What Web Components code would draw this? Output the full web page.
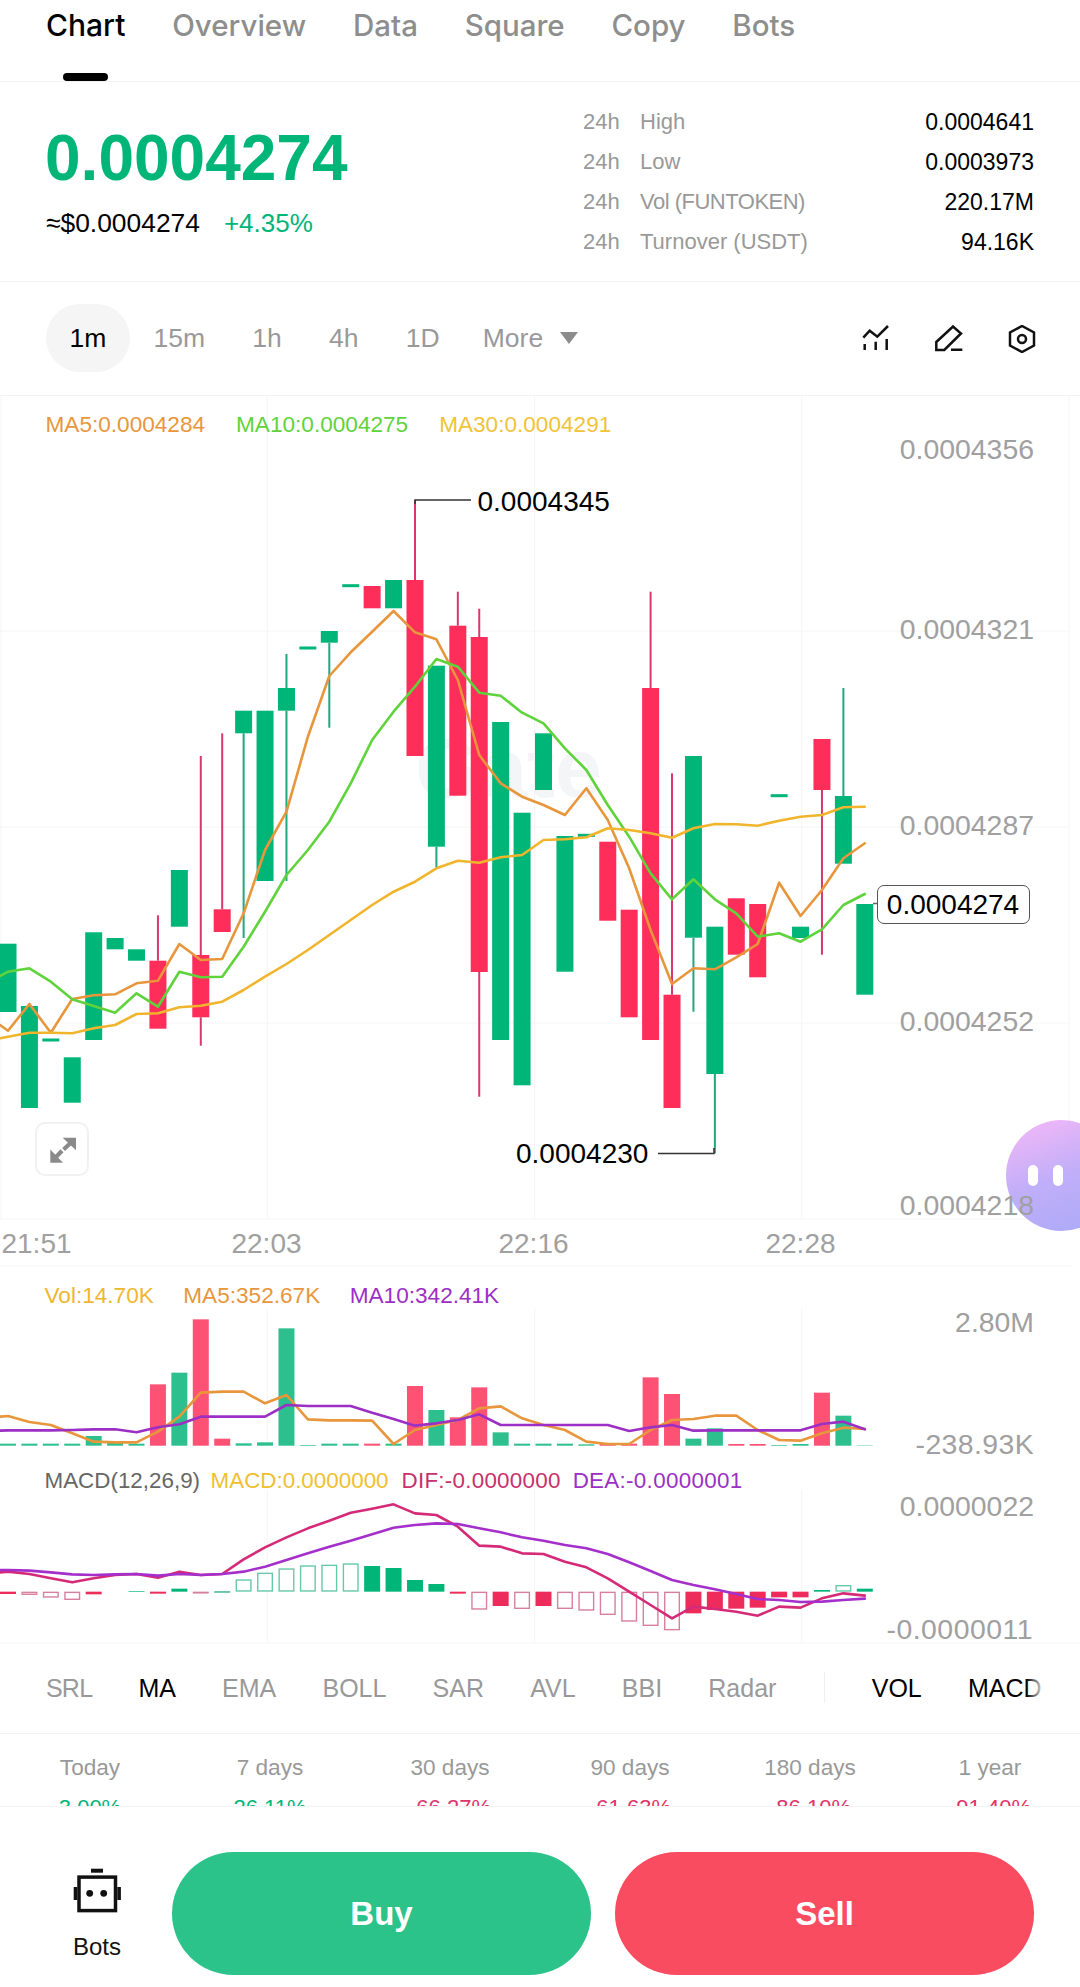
<!DOCTYPE html>
<html lang="en">
<head>
<meta charset="utf-8">
<title>Chart</title>
<style>
html,body{margin:0;padding:0;background:#fff}
body{width:1080px;height:1987px;overflow:hidden;font-family:"Liberation Sans",Arial,sans-serif;color:#000;display:flex;flex-direction:column}
</style>
</head>
<body>
<top-tabs>
  <tab-item active>Chart</tab-item><tab-item>Overview</tab-item><tab-item>Data</tab-item><tab-item>Square</tab-item><tab-item>Copy</tab-item><tab-item>Bots</tab-item>
</top-tabs>
<price-head>
  <stat-row slot="stats" name="High" value="0.0004641"></stat-row>
  <stat-row slot="stats" name="Low" value="0.0003973"></stat-row>
  <stat-row slot="stats" name="Vol (FUNTOKEN)" value="220.17M" tight></stat-row>
  <stat-row slot="stats" name="Turnover (USDT)" value="94.16K"></stat-row>
</price-head>
<time-bar></time-bar>
<kline-main></kline-main>
<kline-vol></kline-vol>
<kline-macd></kline-macd>
<indicator-bar></indicator-bar>
<period-row></period-row>
<trade-bar></trade-bar>

<script>
const F = '"Liberation Sans",Arial,sans-serif';
const X = i => 8 + 21.42 * i;
const GRID = '#f5f5f5';
const RED = '#ff2d5a', GREEN = '#00b578';
const line = (x1,y1,x2,y2,c,w=1.5) => `<line x1="${x1}" y1="${y1}" x2="${x2}" y2="${y2}" stroke="${c}" stroke-width="${w}"/>`;
const rect = (x,y,w,h,c) => `<rect x="${x}" y="${y}" width="${w}" height="${h}" fill="${c}"/>`;
const poly = (pts,c,w=2.6) => `<polyline points="${pts.map(p=>p.join(',')).join(' ')}" fill="none" stroke="${c}" stroke-width="${w}" stroke-linejoin="round" stroke-linecap="round"/>`;
const series = (ys,start,conv=y=>y) => [[0,conv(start)],...ys.map((y,i)=>[X(i),conv(y)])];

class Base extends HTMLElement {
  constructor(){ super(); this.attachShadow({mode:'open'}); }
  render(html){ this.shadowRoot.innerHTML = html; }
}

customElements.define('tab-item', class extends Base {
  connectedCallback(){ this.render(`<style>
    :host{display:flex;flex-direction:column;justify-content:space-between;align-items:center;height:81px;color:#8e8e8e}
    :host([active]){color:#000}
    span{font:500 29.5px/50px Inter,${F}}
    :host([active]) span{font-size:30px}
    i{display:block;width:45px;height:8px;border-radius:4px;background:transparent}
    :host([active]) i{background:#000}
  </style><span><slot></slot></span><i></i>`); }
});
customElements.define('top-tabs', class extends Base {
  connectedCallback(){ this.render(`<style>
    :host{display:flex;gap:46.8px;height:81px;padding-left:46px;border-bottom:1px solid #f3f3f3;flex:none}
  </style><slot></slot>`); }
});
customElements.define('stat-row', class extends Base {
  connectedCallback(){ this.render(`<style>
    :host{display:flex;height:40px;align-items:center;font:22px/40px ${F};color:#999}
    :host([tight]) .n{letter-spacing:-.5px}
    .k{width:57px}.v{margin-left:auto;color:#000;font-size:23px}
  </style><span class="k">24h</span><span class="n">${this.getAttribute('name')}</span><span class="v">${this.getAttribute('value')}</span>`); }
});
customElements.define('price-head', class extends Base {
  connectedCallback(){ this.render(`<style>
    :host{display:flex;height:199px;padding:0 46px;border-bottom:1px solid #f3f3f3;flex:none;justify-content:space-between}
    .l{padding-top:44px}
    .p{font:700 64px/64px ${F};color:${GREEN};margin-left:-1px}
    .s{display:flex;gap:24px;font:26.4px/32px ${F};margin-top:16.5px}
    .s b{font-weight:400;font-size:26px;color:${GREEN}}
    .r{width:451px;padding-top:20px}
  </style>
  <div class="l"><div class="p">0.0004274</div><div class="s"><span>≈$0.0004274</span><b>+4.35%</b></div></div>
  <div class="r"><slot name="stats"></slot></div>`); }
});
customElements.define('time-bar', class extends Base {
  connectedCallback(){
    const items = ['15m','1h','4h','1D'].map(t=>`<span class="t">${t}</span>`).join('');
    this.render(`<style>
    :host{display:flex;align-items:center;height:111px;padding:0 44px 2px 46px;border-bottom:1px solid #f3f3f3;flex:none;font:26.5px/68px ${F};color:#999}
    .t{padding:0 23.6px}
    .on{background:#f5f5f5;color:#000;border-radius:34px;height:68px}
    .mo{margin-left:-4px}
    .tri{width:0;height:0;border-left:9px solid transparent;border-right:9px solid transparent;border-top:12px solid #8c8c8c;margin-left:-7px}
    .ic{margin-left:auto;display:flex;gap:45px;align-items:center;position:relative;top:1px}
    svg{display:block;width:28px;height:28px;fill:none;stroke:#111;stroke-width:2.5}
  </style>
  <span class="t on">1m</span>${items}<span class="t mo">More</span><span class="tri"></span>
  <div class="ic">
    <svg viewBox="0 0 28 28"><polyline points="1.3,12.7 7.7,5.7 15.3,11.7 26,1"/><path d="M2.7 19v6M13.7 16.7V25M24.7 14v11"/></svg>
    <svg viewBox="0 0 28 28"><path d="M1.3 17 18 1.5l8 7L9.3 25H1.3zM16 24.7h11.3"/></svg>
    <svg viewBox="0 0 28 28"><path d="M14 1l12 6.5v13L14 27 2 20.5v-13z"/><circle cx="14" cy="14" r="4"/></svg>
  </div>`);
  }
});

const paneCss = (top,h) => `<style>
  :host{display:block;position:relative;height:${h}px;flex:none}
  svg.c{position:absolute;left:0;top:0;width:1080px;height:${h}px}
  .lg{position:relative;display:flex;padding-left:45.5px;font:22.6px/28px ${F};white-space:nowrap}
  .a{position:absolute;right:46px;font:28.4px/32px ${F};color:#a0a0a0;white-space:nowrap}
  .x{position:absolute;font:28px/32px ${F};color:#a0a0a0;transform:translateX(-50%)}
  .k{position:absolute;font:28px/32px ${F};color:#000;white-space:nowrap}
</style>`;
const svgWrap = (top,h,body) => `<svg class="c" viewBox="0 ${top} 1080 ${h}">${body}</svg>`;

customElements.define('kline-main', class extends Base {
  connectedCallback(){
    const T=396,H=871;
    const c=[['g',943.7,1012],['g',1006,1108],['g',1038.5,1041.5],['g',1057.3,1102.7],['g',932.3,1040],['g',938,949.3],['g',949.3,960.7],
      ['r',960.7,1028.7,915.3],['g',870,926.7],['r',955,1017.3,756,1045.7],['r',909.3,932,733.3],['g',710.7,733.3,0,938],['g',710.7,881],['g',688,710.7,654,881],
      ['g',646.5,649.5],['g',631,642.7,0,727.7],['g',584.2,587.2],['r',586,608.3],['g',580,608.3],['r',580,756,500],['g',665.7,846.7,0,868],['r',625.7,795.7,591.7],
      ['r',637,972,608.7,1096.7],['g',722,1040],['g',812.7,1085.3],['g',733.3,790],['g',836,971.7],['g',833.8,836.8],['r',841.7,920.7],['r',909.7,1017.3],
      ['r',688,1040,591.7],['r',994.7,1108,773.3],['g',756,937.7,0,1011.7],['g',926.7,1074,0,1153.3],['r',898.3,954.7],['r',904,977.3],['g',794.2,797.2],
      ['g',926.7,938],['r',739,790,0,954.7],['g',796,863.7,688],['g',904,994.7]];
    let candles='';
    c.forEach((d,i)=>{
      const x=X(i),col=d[0]=='r'?RED:GREEN,wc=d[0]=='r'?'#d8386c':'#21a67f';
      if(d[3]) candles+=line(x,d[3],x,d[1],wc,2);
      if(d[4]) candles+=line(x,d[2],x,d[4],wc,2);
      candles+=rect(x-8.5,d[1],17,d[2]-d[1],col);
    });
    const ma5=series([1030.7,1004,1032.7,999,995.3,994.3,983.3,980.7,944,960,959,913.3,850,811.7,736.7,676,652.3,631.7,611,632.3,639.3,680,755,783.3,796.7,805,815,788.3,820,868.3,930,984,968.3,969.3,957.3,944,882.7,916,890,858.3,843.3],1025);
    const ma10=series([971.7,968.3,981.7,999.3,1006,1012.7,993.3,1006.7,971.7,977.3,976.7,946.7,911.7,875,850,821.7,783.3,740,711.7,686.7,659,666.7,692.7,695.7,712.7,723.3,748.3,770,805,836.7,873.3,899.3,879.3,899.3,913.3,936.7,933.3,941.7,929.3,905,894],976);
    const ma30=series([1036.7,1032.7,1032.7,1033.3,1028.3,1025,1014,1013.3,1007.3,1005.7,1001.7,990,976.7,964,950,935,920,905,891.7,881.7,868.3,860.7,862.7,857.3,855,840,839.3,837.3,828.3,830,833.3,837.7,828.3,824,824.3,825.7,820.7,816.7,815,807.3,806.7],1038.3);
    let grid='';
    [1,267.3,534.5,801.7,1069].forEach(x=>grid+=line(x,396,x,1219,GRID,1));
    [631,827,1023,1219].forEach(y=>grid+=line(0,y,1069,y,GRID,1));
    grid+=line(0,395.5,1069,395.5,GRID,1);
    grid+=line(0,1266,1072,1266,GRID,1);
    const marks = `<polyline points="415,504 415,500 471,500" fill="none" stroke="#333" stroke-width="1.5"/>
      <polyline points="658,1153.5 714,1153.5 714,1148" fill="none" stroke="#333" stroke-width="1.5"/>`+line(873,903.5,877,903.5,'#666',1.5);
    const axis=[[448.5,'0.0004356'],[629,'0.0004321'],[824.5,'0.0004287'],[1021.2,'0.0004252'],[1205,'0.0004218']]
      .map(([y,t])=>`<span class="a" style="top:${y-T-16}px">${t}</span>`).join('');
    const times=[[36.5,'21:51'],[266.5,'22:03'],[533.5,'22:16'],[800.5,'22:28']]
      .map(([x,t])=>`<span class="x" style="left:${x}px;top:${1244-T-16}px">${t}</span>`).join('');
    this.render(paneCss(T,H)+`<style>
      .wm{position:absolute;left:415px;top:${726-T}px;font:700 84px/84px ${F};color:#f4f5f6;white-space:nowrap}
      .price{position:absolute;left:876.5px;top:${884.5-T}px;width:153px;height:39.5px;box-sizing:border-box;border:1.5px solid #555;border-radius:7px;background:#fff;font:28px/37px ${F};text-align:center;color:#000}
      .exp{position:absolute;left:35px;top:${1122-T}px;width:54px;height:54px;box-sizing:border-box;border:2px solid #f1f1f1;border-radius:10px;background:#fff}
      .exp svg{position:absolute;left:-2px;top:-2px;width:54px;height:54px}
      .bot{position:absolute;left:1006px;top:${1120-T}px;width:111px;height:111px;border-radius:50%;background:linear-gradient(160deg,rgba(240,180,247,.95) 5%,rgba(190,170,248,.95) 50%,rgba(165,165,247,.95) 100%)}
      .bot i{position:absolute;top:45px;width:10px;height:21px;border-radius:5px;background:#fff}
      :host{overflow:hidden}
    </style>
    <span class="wm">Gate</span>
    ${svgWrap(T,H,grid+candles+poly(ma5,'#e8963c')+poly(ma10,'#5fd33b')+poly(ma30,'#f0b52c')+marks)}
    <div class="lg" style="padding-top:15px;gap:31px"><span style="color:#e8963c">MA5:0.0004284</span><span style="color:#5fd33b">MA10:0.0004275</span><span style="color:#f2c237">MA30:0.0004291</span></div>
    <div class="bot"><i style="left:22px"></i><i style="left:47px"></i></div>
    ${axis}${times}
    <span class="k" style="left:477.5px;top:${501.7-T-16}px">0.0004345</span>
    <span class="k" style="left:516px;top:${1154-T-16}px">0.0004230</span>
    <div class="price">0.0004274</div>
    <div class="exp"><svg viewBox="0 0 54 54" fill="#8a8a8a" stroke="#8a8a8a"><path d="M27.7 15.7H41V28.3zM15.3 40.7V27.5L28 40.7z" stroke="none"/><path d="M35 21.5 28.6 27.5M21 35l6-6.2" stroke-width="4.2" fill="none"/></svg></div>`);
  }
});

const Z = y => 1270 + y/3;
customElements.define('kline-vol', class extends Base {
  connectedCallback(){
    const T=1267,H=189,base=1445.7;
    const v=[['g',521],['g',521],['g',521],['g',521],['g',498],['g',517],['g',521],['r',343],['g',308],['r',148],['r',506],['g',520],['g',517],['g',175],['g',525],['g',521],['g',521],['r',521],['g',521],['r',348],['g',420],['r',442],['r',352],['g',487],['g',521],['g',521],['g',521],['g',523],['r',521],['r',521],['r',322],['r',372],['g',506],['g',475],['r',522],['r',522],['g',525],['g',522],['r',368],['g',437],['g',526]];
    let bars='';
    v.forEach((d,i)=>{const y=Z(d[1]);bars+=rect(X(i)-8,y,16,base-y,d[0]=='r'?'#fe5275':'#2dc08e');});
    const m5=series([438,456,465,490,515,517,517,485,440,368,365,365,400,375,448,451,451,452,522,480,465,450,415,409,445,465,480,515,522,522,480,450,447,437,437,480,510,512,490,473,477],440,Z);
    const m10=series([481,481,481,480,478,478,487,472,463,440,440,440,440,405,408,408,408,428,447,467,460,450,433,465,465,465,465,465,465,483,472,465,482,481,481,481,481,481,462,455,478],482,Z);
    let grid='';
    [267.3,534.5,801.7].forEach(x=>grid+=line(x,1308,x,1446,GRID,1));
    this.render(paneCss(T,H)+svgWrap(T,H,grid+bars+poly(m5,'#e8963c')+poly(m10,'#9c2fc4'))+
    `<div class="lg" style="padding-top:15px;gap:29.5px;font-size:22.6px;padding-left:44.5px"><span style="color:#efb72e">Vol:14.70K</span><span style="color:#e8963c">MA5:352.67K</span><span style="color:#9c2fc4">MA10:342.41K</span></div>
    <span class="a" style="top:${1321.7-T-16}px">2.80M</span>
    <span class="a" style="top:${1444-T-16}px;letter-spacing:.4px">-238.93K</span>`);
  }
});
customElements.define('kline-macd', class extends Base {
  connectedCallback(){
    const T=1456,H=188,zero=965;
    const b=[['f',972],['h',975],['h',983],['h',990],['f',973],null,['f',963],['f',971],['f',956],['h',968],['h',963],['h',928],['h',908],['h',895],['h',886],['h',884],['h',880],['f',888],['f',894],['f',930],['f',942],['f',971],['h',1019],['f',1008],['h',1017],['f',1008],['h',1017],['h',1022],['h',1035],['h',1055],['h',1068],['h',1081],['f',1030],['f',1020],['f',1016],['f',1013],['f',982],['f',982],['f',960],['h',945],['f',956]];
    let bars='';
    b.forEach((d,i)=>{
      if(!d) return;
      const up=d[1]<zero, y1=Z(Math.min(d[1],zero)), y2=Z(Math.max(d[1],zero)), x=X(i)-8;
      if(d[0]=='f') bars+=rect(x,y1,16,y2-y1,up?GREEN:'#ee2c5c');
      else bars+=`<rect x="${x+.7}" y="${y1+.7}" width="14.6" height="${Math.max(y2-y1-1.4,.5)}" fill="#fff" stroke="${up?'#66c8a8':'#d77f9c'}" stroke-width="1.4"/>`;
    });
    const dif=series([905,912,925,937,925,915,912,923,905,915,912,868,832,802,775,752,728,716,703,730,735,770,827,830,850,852,875,892,925,965,1005,1045,1010,1017,1025,1037,1010,1013,985,970,977],907,Z);
    const dea=series([900,902,907,913,915,913,912,917,912,915,912,905,890,870,850,830,812,793,773,765,760,762,775,787,802,812,825,835,852,877,903,930,945,958,972,987,990,996,995,990,986],900,Z);
    let grid='';
    [267.3,534.5,801.7].forEach(x=>grid+=line(x,1490,x,1643,GRID,1));
    grid+=line(0,1643,1080,1643,GRID,1);
    this.render(paneCss(T,H)+svgWrap(T,H,grid+bars+poly(dif,'#d52a78')+poly(dea,'#a52fcb'))+
    `<div class="lg" style="padding-top:11px;gap:10.5px;font-size:22.4px;padding-left:44.5px"><span style="color:#666">MACD(12,26,9)</span><span style="color:#f0c030">MACD:0.0000000</span><span style="color:#c8306e;letter-spacing:.25px;margin-left:2.5px">DIF:-0.0000000</span><span style="color:#9c2fc4;letter-spacing:.3px;margin-left:1.5px">DEA:-0.0000001</span></div>
    <span class="a" style="top:${1506-T-16}px">0.0000022</span>
    <span class="a" style="top:${1629-T-16}px;right:47px;letter-spacing:.5px">-0.0000011</span>`);
  }
});
customElements.define('indicator-bar', class extends Base {
  connectedCallback(){
    const a=['SRL','MA','EMA','BOLL','SAR','AVL','BBI','Radar'].map(t=>`<span class="${t=='MA'?'on':''}${t=='SRL'?'sr':''}">${t}</span>`).join('');
    this.render(`<style>
      :host{display:flex;position:relative;align-items:center;gap:46.2px;height:87px;padding:0 0 2px 46px;border-bottom:1px solid #f3f3f3;flex:none;overflow:hidden;font:25px/32px ${F};color:#999;white-space:nowrap}
      .on{color:#000}
      .sr{letter-spacing:-.8px}
      .d{width:1px;height:31px;background:#f0f0f0;flex:none;margin-left:1px;margin-right:1px}
      .fade{position:absolute;left:1026px;right:0;top:0;bottom:0;background:linear-gradient(90deg,rgba(255,255,255,0),#fff 36%)}
    </style>${a}<i class="d"></i><span class="on">VOL</span><span class="on">MACD</span><i class="fade"></i>`);
  }
});
customElements.define('period-row', class extends Base {
  connectedCallback(){
    const d=[['Today','3.00%','up'],['7 days','26.11%','up'],['30 days','-66.27%','down'],['90 days','-61.63%','down'],['180 days','-86.10%','down'],['1 year','-91.40%','down']];
    this.render(`<style>
      :host{display:grid;grid-template-columns:repeat(6,180px);height:72px;overflow:hidden;border-bottom:1px solid #f3f3f3;flex:none}
      div{text-align:center;padding-top:20px;font:22.6px/28px ${F};color:#999}
      b{display:block;font-weight:400;font-size:22px;margin-top:12px}
      .up{color:${GREEN}}.down{color:#e0336b}
    </style>`+d.map(r=>`<div>${r[0]}<b class="${r[2]}">${r[1]}</b></div>`).join(''));
  }
});
customElements.define('trade-bar', class extends Base {
  connectedCallback(){
    this.render(`<style>
      :host{display:flex;flex:none;padding:45px 46px 0 73px;height:135px}
      .bots{width:48px;margin-right:51px;padding-top:16px;text-align:center;font:24px/28px ${F};color:#111;position:relative}
      .bots svg{display:block;width:48px;height:46px;margin-bottom:19px}
      .btn{width:419px;height:123px;border-radius:62px;color:#fff;font:700 33px/123px ${F};text-align:center}
      .buy{background:#2cc38a;margin-right:24px}.sell{background:#fa4c61}
    </style>
    <div class="bots"><svg viewBox="0 0 48 46"><rect x="18" y=".7" width="12" height="4" fill="#111"/><rect x="6" y="9.1" width="36.5" height="33.5" fill="none" stroke="#111" stroke-width="3.5"/><rect x=".7" y="19" width="3.6" height="13" fill="#111"/><rect x="44.3" y="19" width="3.6" height="13" fill="#111"/><circle cx="16.7" cy="25.3" r="3.4" fill="#111"/><circle cx="30.7" cy="25.3" r="3.4" fill="#111"/></svg>Bots</div>
    <div class="btn buy">Buy</div><div class="btn sell">Sell</div>`);
  }
});
</script>
</body>
</html>
